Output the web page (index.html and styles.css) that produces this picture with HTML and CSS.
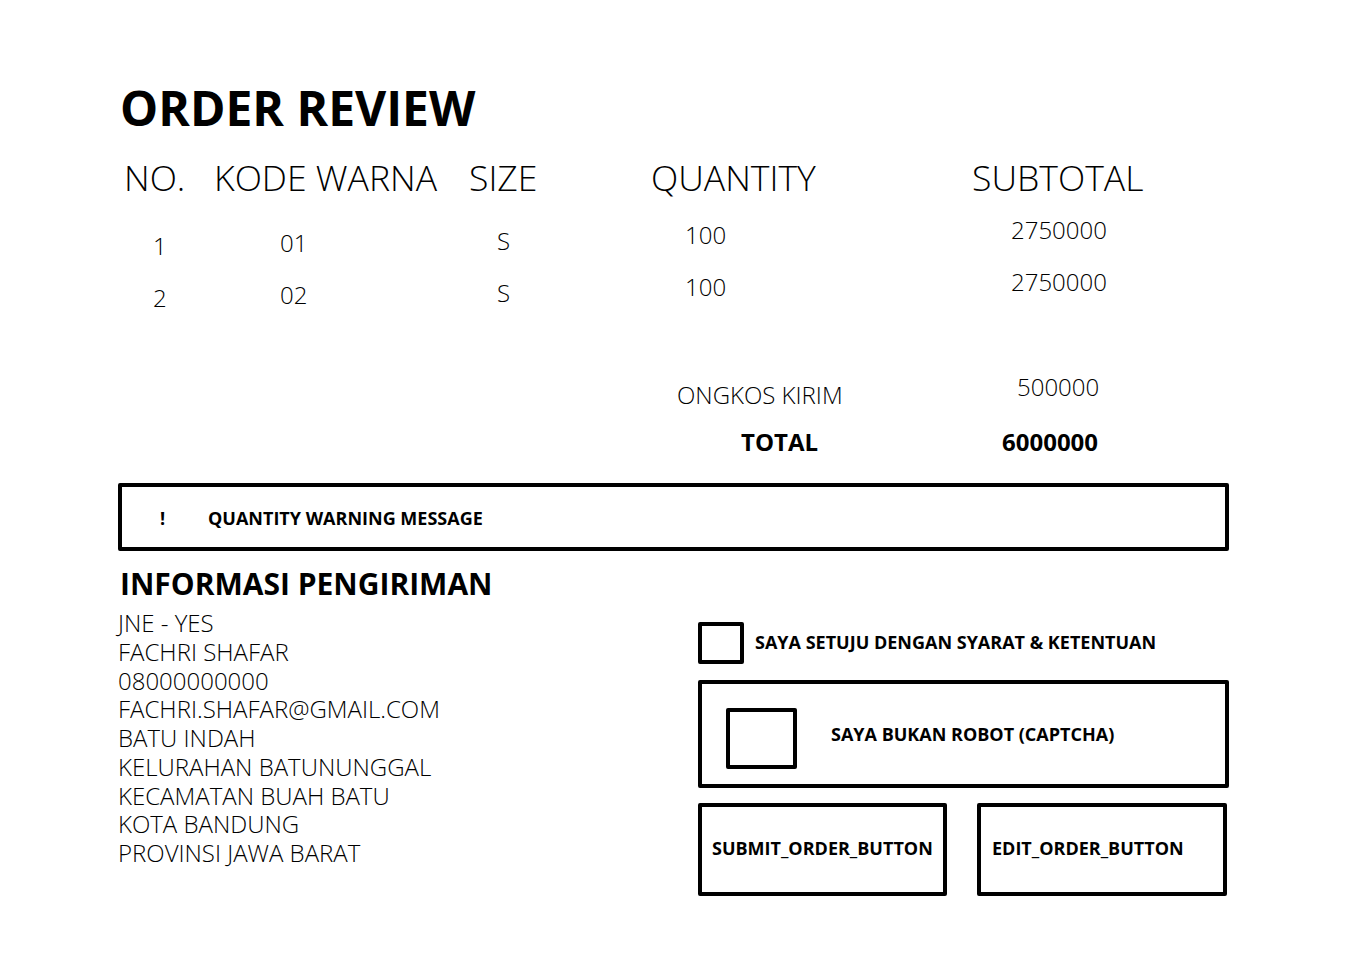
FILE: index.html
```html
<html>
    <head>
        <meta charset="utf-8">
        <title>Order Review</title>
        <link rel="stylesheet" href="styles.css">
    </head>
    <body>
        <div class="page">
            <h1 class="title">ORDER REVIEW</h1>

            <div class="order-table">
                <div class="row head">
                    <div class="cell">NO.</div>
                    <div class="cell">KODE WARNA</div>
                    <div class="cell">SIZE</div>
                    <div class="cell">QUANTITY</div>
                    <div class="cell">SUBTOTAL</div>
                </div>
                <div class="row item">
                    <div class="cell c-no">1</div>
                    <div class="cell c-kode">01</div>
                    <div class="cell c-size">S</div>
                    <div class="cell c-qty">100</div>
                    <div class="cell c-sub">2750000</div>
                </div>
                <div class="row item">
                    <div class="cell c-no">2</div>
                    <div class="cell c-kode">02</div>
                    <div class="cell c-size">S</div>
                    <div class="cell c-qty">100</div>
                    <div class="cell c-sub">2750000</div>
                </div>
                <div class="row fee">
                    <div class="cell"></div>
                    <div class="cell"></div>
                    <div class="cell"></div>
                    <div class="cell c-fee-label">ONGKOS KIRIM</div>
                    <div class="cell c-fee">500000</div>
                </div>
                <div class="row total">
                    <div class="cell"></div>
                    <div class="cell"></div>
                    <div class="cell"></div>
                    <div class="cell c-total-label">TOTAL</div>
                    <div class="cell c-total">6000000</div>
                </div>
            </div>

            <div class="warning">
                <span class="warning-icon">!</span>
                <span class="warning-text">QUANTITY WARNING MESSAGE</span>
            </div>

            <div class="bottom">
                <div class="shipping">
                    <h2 class="subtitle">INFORMASI PENGIRIMAN</h2>
                    <div class="address">
                        <div>JNE - YES</div>
                        <div>FACHRI SHAFAR</div>
                        <div>08000000000</div>
                        <div>FACHRI.SHAFAR@GMAIL.COM</div>
                        <div>BATU INDAH</div>
                        <div>KELURAHAN BATUNUNGGAL</div>
                        <div>KECAMATAN BUAH BATU</div>
                        <div>KOTA BANDUNG</div>
                        <div>PROVINSI JAWA BARAT</div>
                    </div>
                </div>

                <div class="actions">
                    <label class="agree">
                        <span class="box"></span>
                        <span class="label-text">SAYA SETUJU DENGAN SYARAT &amp; KETENTUAN</span>
                    </label>
                    <div class="captcha">
                        <span class="box box-big"></span>
                        <span class="label-text">SAYA BUKAN ROBOT (CAPTCHA)</span>
                    </div>
                    <div class="buttons">
                        <button class="btn btn-submit">SUBMIT_ORDER_BUTTON</button>
                        <button class="btn btn-edit">EDIT_ORDER_BUTTON</button>
                    </div>
                </div>
            </div>
        </div>
    </body>
</html>
```

FILE: styles.css
```css
body {
    margin: 0px;
    padding: 0px;
    background: white;
    color: black;
    font-family: "Open Sans", "Liberation Sans", sans-serif;
}

.page {
    padding: 78px 120px 0px 118px;
    width: 1111px;
}

.title {
    margin: 0px 0px 0px 2px;
    font-size: 48px;
    font-weight: 700;
    line-height: 60px;
}

/* table */

.order-table {
    margin-top: 17px;
}

.row {
    display: grid;
    grid-template-columns: 90px 255px 182px 321px 1fr;
    padding-left: 6px;
}

.head {
    height: 44px;
    font-size: 35.6px;
    font-weight: 300;
    line-height: 44px;
}

.item, .fee, .total {
    font-size: 24px;
    font-weight: 300;
    line-height: 30px;
}

.item {
    height: 52px;
}

.head + .item {
    margin-top: 16px;
}

.c-no   { padding: 16px 0 0 29px; }
.c-kode { padding: 13px 0 0 66px; }
.c-size { padding: 11px 0 0 28px; }
.c-qty  { padding: 5px 0 0 34px; }
.c-sub  { padding: 0px 0 0 39px; }

.fee {
    height: 55px;
    margin-top: 53px;
}

.c-fee-label { padding: 8px 0 0 26px; }
.c-fee       { padding: 0px 0 0 45px; }

.total {
    height: 30px;
    font-weight: 700;
}

.c-total-label { padding-left: 90px; }
.c-total       { padding-left: 30px; }

/* warning */

.warning {
    margin-top: 26px;
    height: 58px;
    padding-top: 2px;
    box-sizing: content-box;
    border: 4px solid black;
    border-radius: 2px;
    display: flex;
    align-items: center;
    font-size: 18px;
    font-weight: 700;
}

.warning-icon {
    width: 48px;
    padding-left: 38px;
}

/* bottom */

.bottom {
    display: flex;
}

.shipping {
    width: 580px;
}

.subtitle {
    margin: 15px 0px 0px 2px;
    font-size: 30px;
    font-weight: 700;
    line-height: 36px;
}

.address {
    margin-top: 7px;
    font-size: 24px;
    font-weight: 300;
    line-height: 28.75px;
}

.actions {
    width: 531px;
    padding-top: 71px;
}

.box {
    display: block;
    flex: none;
    width: 38px;
    height: 34px;
    border: 4px solid black;
    border-radius: 2px;
}

.label-text {
    font-size: 18px;
    font-weight: 700;
}

.agree {
    display: flex;
    align-items: center;
    gap: 11px;
}

.agree .label-text {
    margin-bottom: 3px;
}

.captcha {
    margin-top: 16px;
    height: 100px;
    border: 4px solid black;
    border-radius: 2px;
    display: flex;
    align-items: center;
    gap: 34px;
    padding-left: 24px;
}

.box-big {
    width: 63px;
    height: 53px;
    align-self: flex-start;
    margin-top: 24px;
}

.buttons {
    margin-top: 15px;
    display: flex;
    gap: 30px;
}

.btn {
    width: 250px;
    height: 93px;
    background: white;
    border: 4px solid black;
    border-radius: 2px;
    font-family: "Open Sans", "Liberation Sans", sans-serif;
    font-size: 18px;
    font-weight: 700;
    color: black;
    text-align: left;
    padding: 0px 0px 3px 10px;
    margin: 0px;
}

.btn-submit {
    width: 249px;
}

.btn-edit {
    padding-left: 11px;
}
```
